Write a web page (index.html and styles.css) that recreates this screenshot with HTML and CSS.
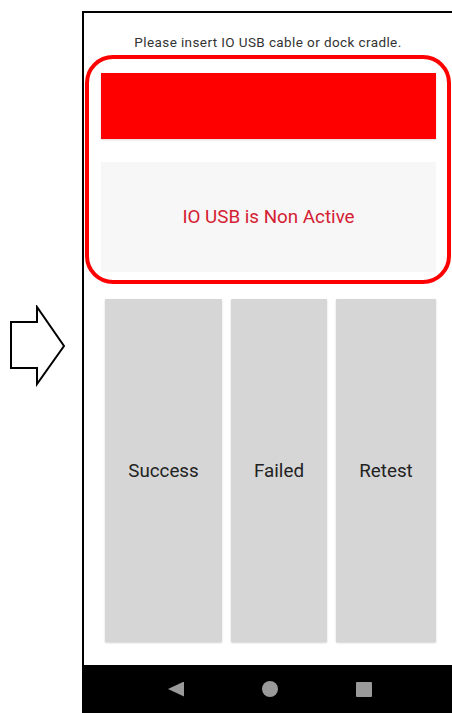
FILE: index.html
```html
<!DOCTYPE html>
<html>

<head>
  <title>IO USB Test</title>
  <link rel="stylesheet" href="styles.css">
</head>

<body>
  <div class="side">
    <svg class="arrow" width="56" height="82" viewBox="0 0 56 82">
      <polygon points="1,17 27,17 27,2 54,41 27,79 27,63 1,63" fill="#fff" stroke="#000" stroke-width="2" />
    </svg>
  </div>

  <div class="phone">
    <div class="screen">
      <p class="hint">Please insert IO USB cable or dock cradle.</p>

      <div class="status"></div>
      <div class="message">IO USB is Non Active</div>

      <div class="actions">
        <button class="btn">Success</button>
        <button class="btn">Failed</button>
        <button class="btn">Retest</button>
      </div>
    </div>

    <div class="nav">
      <span class="nav-back"></span>
      <span class="nav-home"></span>
      <span class="nav-recent"></span>
    </div>

    <!-- annotation around the status area -->
    <div class="highlight"></div>
  </div>
</body>

</html>
```

FILE: styles.css
```css
body {
  margin: 0;
  font-family: Roboto, 'Noto Sans', sans-serif;
  background-color: #fff;
  display: flex;
  height: 713px;
  overflow: hidden;
}

.side {
  width: 82px;
  flex-shrink: 0;
}

.arrow {
  display: block;
  margin-top: 305px;
  margin-left: 10px;
}

.phone {
  position: relative;
  flex: 1;
  margin-top: 11px;
  border-top: 2px solid #000;
  border-left: 2px solid #000;
  display: flex;
  flex-direction: column;
}

.screen {
  flex: 1;
  padding-top: 22px;
}

.hint {
  margin: 0;
  text-align: center;
  font-size: 13.5px;
  letter-spacing: 0.4px;
  line-height: 14px;
  color: #333;
}

.status {
  height: 66px;
  margin: 24px 16px 0 17px;
  background-color: #ff0000;
  box-shadow: 0 1px 2px rgba(0, 0, 0, 0.15);
}

.message {
  height: 110px;
  margin: 23px 16px 0 17px;
  background-color: #f7f7f7;
  display: flex;
  align-items: center;
  justify-content: center;
  font-size: 18.8px;
  color: #d42032;
}

.actions {
  display: grid;
  grid-template-columns: 117px 96px 1fr;
  column-gap: 9px;
  height: 343px;
  margin: 27px 16px 0 21px;
}

.btn {
  border: none;
  border-radius: 1px;
  background-color: #d6d6d6;
  box-shadow: 0 1px 2px rgba(0, 0, 0, 0.18);
  font-family: Roboto, 'Noto Sans', sans-serif;
  font-size: 18.8px;
  color: #222;
  padding: 0;
}

.nav {
  height: 48px;
  background-color: #000;
  display: flex;
  align-items: center;
  gap: 78px;
  padding-left: 84px;
}

.nav span {
  display: block;
  width: 16px;
  height: 15px;
  background-color: #9a9a9a;
}

.nav-back {
  clip-path: polygon(100% 0, 100% 100%, 0 50%);
}

.nav-home {
  border-radius: 50%;
  height: 16px !important;
}

.nav-recent {
  border-radius: 1px;
}

.highlight {
  position: absolute;
  left: 1px;
  top: 42px;
  width: 366px;
  height: 229px;
  box-sizing: border-box;
  border: 4px solid #ff0000;
  border-radius: 28px;
}
```
